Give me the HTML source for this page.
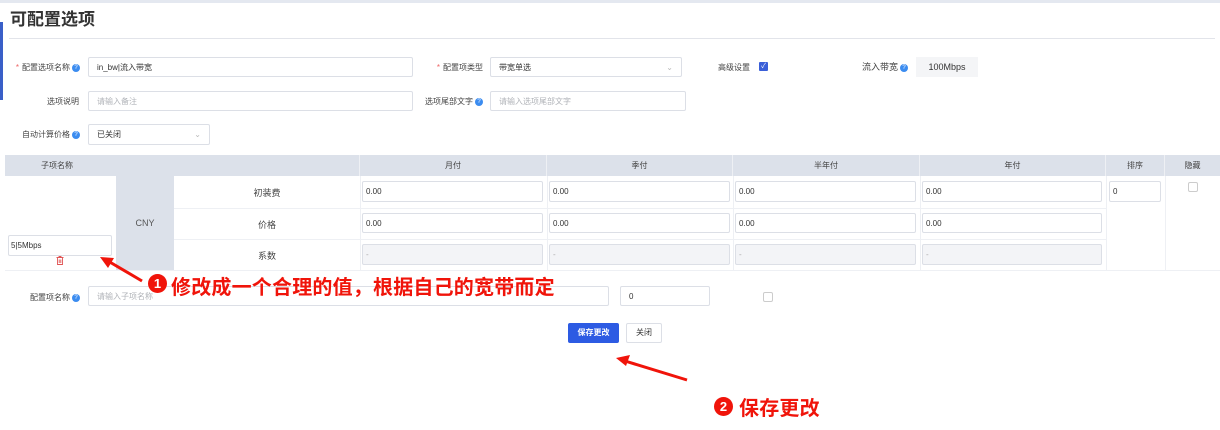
<!DOCTYPE html>
<html><head><meta charset="utf-8"><style>
*{margin:0;padding:0;box-sizing:border-box}
body{width:1220px;height:430px;background:#fff;position:relative;overflow:hidden;font-family:"Liberation Sans","Noto Sans CJK SC",sans-serif;color:#333;font-size:8px}
.a{position:absolute;white-space:nowrap}
.in{position:absolute;border:1px solid #dcdfe6;border-radius:2px;background:#fff;font-size:8px;padding-left:8px;display:flex;align-items:center;color:#333;white-space:nowrap}
.ph{color:#b0b3b8}
.dis{background:#f3f4f7;color:#aaa;padding-left:3px}
.lb{position:absolute;font-size:8px;color:#444;text-align:right;white-space:nowrap}
.q{display:inline-block;width:8px;height:8px;border-radius:50%;background:#3b8cf0;color:#fff;font-size:6px;line-height:8px;text-align:center;vertical-align:middle;margin-left:2px}
.st{color:#e66;margin-right:3px}
.th{position:absolute;top:155px;height:21px;line-height:21px;text-align:center;font-size:8px;color:#444;background:#dce1ea;border-right:1px solid #eef0f4}
.vl{position:absolute;width:1px;background:#eef0f4}
.hl{position:absolute;height:1px;background:#eef0f4}
.cb{position:absolute;width:10px;height:10px;border:1px solid #ccc;border-radius:2px;background:#fff}
.red{color:#f0140a;font-weight:bold;font-size:20px;letter-spacing:0.2px}
.circ{position:absolute;width:19px;height:19px;border-radius:50%;background:#f0140a;color:#fff;font-size:13px;text-align:center;line-height:19px;font-weight:bold}
</style></head><body>
<div class="a" style="left:0;top:0;width:1220px;height:3px;background:#e4e8f0"></div>
<div class="a" style="left:0;top:22px;width:3px;height:78px;background:#3a5fc8"></div>
<div class="a" style="left:10px;top:5px;font-size:17px;font-weight:bold;color:#333">可配置选项</div>
<div class="a" style="left:9px;top:38px;width:1206px;height:1px;background:#e2e4ea"></div>

<div class="lb" style="left:0;top:62px;width:80px"><span class="st">*</span>配置选项名称<span class="q">?</span></div>
<div class="in" style="left:88px;top:57px;width:325px;height:20px">in_bw|流入带宽</div>
<div class="lb" style="left:420px;top:62px;width:63px"><span class="st">*</span>配置项类型</div>
<div class="in" style="left:490px;top:57px;width:192px;height:20px">带宽单选<span style="position:absolute;right:8px;color:#bbb">&#8964;</span></div>
<div class="lb" style="left:710px;top:62px;width:40px">高级设置</div>
<div class="a" style="left:759px;top:62px;width:9px;height:9px;background:#3a5fd8;border-radius:1px;color:#fff;font-size:7px;line-height:9px;text-align:center">✓</div>
<div class="lb" style="left:855px;top:60px;width:53px;font-size:9px">流入带宽<span class="q">?</span></div>
<div class="a" style="left:916px;top:57px;width:62px;height:20px;background:#f4f5f7;font-size:9px;line-height:20px;text-align:center;color:#333">100Mbps</div>

<div class="lb" style="left:20px;top:96px;width:59px">选项说明</div>
<div class="in ph" style="left:88px;top:91px;width:325px;height:20px">请输入备注</div>
<div class="lb" style="left:410px;top:96px;width:73px">选项尾部文字<span class="q">?</span></div>
<div class="in ph" style="left:490px;top:91px;width:196px;height:20px">请输入选项尾部文字</div>

<div class="lb" style="left:10px;top:129px;width:70px">自动计算价格<span class="q">?</span></div>
<div class="in" style="left:88px;top:124px;width:122px;height:21px">已关闭<span style="position:absolute;right:8px;color:#bbb">&#8964;</span></div>

<div class="th" style="left:5px;width:355px;text-align:left"><span style="margin-left:36px">子项名称</span></div>
<div class="th" style="left:360px;width:187px">月付</div>
<div class="th" style="left:547px;width:186px">季付</div>
<div class="th" style="left:733px;width:187px">半年付</div>
<div class="th" style="left:920px;width:186px">年付</div>
<div class="th" style="left:1106px;width:59px">排序</div>
<div class="th" style="left:1165px;width:55px;border:none">隐藏</div>

<div class="a" style="left:116px;top:176px;width:58px;height:94px;background:#dce1ea;font-size:9px;color:#555;text-align:center;line-height:94px">CNY</div>
<div class="hl" style="left:174px;top:208px;width:932px"></div>
<div class="hl" style="left:174px;top:239px;width:932px"></div>
<div class="hl" style="left:5px;top:270px;width:1215px"></div>
<div class="vl" style="left:360px;top:176px;height:94px"></div>
<div class="vl" style="left:547px;top:176px;height:94px"></div>
<div class="vl" style="left:733px;top:176px;height:94px"></div>
<div class="vl" style="left:920px;top:176px;height:94px"></div>
<div class="vl" style="left:1106px;top:176px;height:94px"></div>
<div class="vl" style="left:1165px;top:176px;height:94px"></div>
<div class="a" style="left:174px;top:186px;width:186px;text-align:center;font-size:9px;color:#444">初装费</div>
<div class="a" style="left:174px;top:218px;width:186px;text-align:center;font-size:9px;color:#444">价格</div>
<div class="a" style="left:174px;top:249px;width:186px;text-align:center;font-size:9px;color:#444">系数</div>

<div class="in" style="left:362px;top:181px;width:181px;height:21px;padding-left:3px">0.00</div>
<div class="in" style="left:549px;top:181px;width:181px;height:21px;padding-left:3px">0.00</div>
<div class="in" style="left:735px;top:181px;width:181px;height:21px;padding-left:3px">0.00</div>
<div class="in" style="left:922px;top:181px;width:180px;height:21px;padding-left:3px">0.00</div>
<div class="in" style="left:362px;top:213px;width:181px;height:20px;padding-left:3px">0.00</div>
<div class="in" style="left:549px;top:213px;width:181px;height:20px;padding-left:3px">0.00</div>
<div class="in" style="left:735px;top:213px;width:181px;height:20px;padding-left:3px">0.00</div>
<div class="in" style="left:922px;top:213px;width:180px;height:20px;padding-left:3px">0.00</div>
<div class="in dis" style="left:362px;top:244px;width:181px;height:21px">-</div>
<div class="in dis" style="left:549px;top:244px;width:181px;height:21px">-</div>
<div class="in dis" style="left:735px;top:244px;width:181px;height:21px">-</div>
<div class="in dis" style="left:922px;top:244px;width:180px;height:21px">-</div>
<div class="in" style="left:1109px;top:181px;width:52px;height:21px;padding-left:3px">0</div>
<div class="cb" style="left:1188px;top:182px"></div>

<div class="in" style="left:8px;top:235px;width:104px;height:21px;padding-left:2px">5|5Mbps</div>
<svg class="a" style="left:56px;top:256px" width="8" height="9" viewBox="0 0 8 9"><path d="M0.5 1.5h7M3 1.5V0.5h2v1M1.5 1.5v7h5v-7M3.2 3.5v3.5M4.8 3.5v3.5" stroke="#e05555" fill="none" stroke-width="0.9"/></svg>

<div class="lb" style="left:20px;top:292px;width:60px">配置项名称<span class="q">?</span></div>
<div class="in ph" style="left:88px;top:286px;width:521px;height:20px">请输入子项名称</div>
<div class="in" style="left:620px;top:286px;width:90px;height:20px">0</div>
<div class="cb" style="left:763px;top:292px"></div>

<div class="a" style="left:568px;top:323px;width:51px;height:20px;background:#2d5be3;border-radius:2px;color:#fff;font-size:8px;text-align:center;line-height:20px;font-weight:bold">保存更改</div>
<div class="a" style="left:626px;top:323px;width:36px;height:20px;border:1px solid #dcdfe6;border-radius:2px;font-size:8px;text-align:center;line-height:18px;color:#333">关闭</div>

<svg class="a" style="left:0;top:0" width="1220" height="430">
<line x1="142" y1="281" x2="108" y2="261" stroke="#f0140a" stroke-width="3"/>
<polygon points="100,257 114,258 108,268" fill="#f0140a"/>
<line x1="687" y1="380" x2="625" y2="361" stroke="#f0140a" stroke-width="3"/>
<polygon points="616,358 630,355 626,366" fill="#f0140a"/>
</svg>
<div class="circ" style="left:148px;top:274px">1</div>
<div class="a red" style="left:171px;top:271px">修改成一个合理的值，根据自己的宽带而定</div>
<div class="circ" style="left:714px;top:397px">2</div>
<div class="a red" style="left:739px;top:392px">保存更改</div>
</body></html>
